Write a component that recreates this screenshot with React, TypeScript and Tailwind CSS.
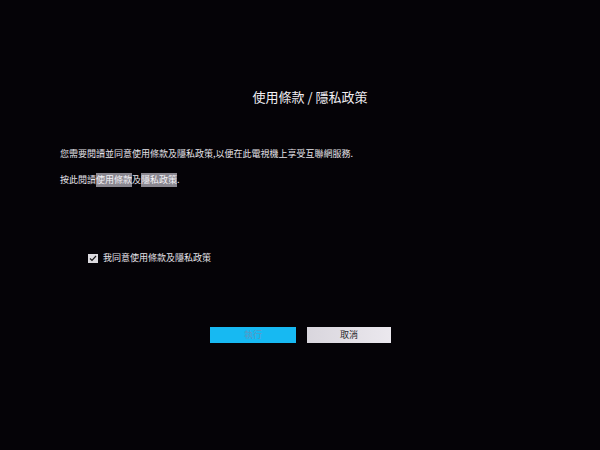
import React from 'react';

const font = { fontFamily: '"Noto Sans CJK TC", "Noto Sans CJK SC", "Liberation Sans", sans-serif' };

export default function App() {
  return (
    <div className="w-[600px] h-[450px] bg-[#050307] text-[#e6e4ea] overflow-hidden" style={font}>
      {/* 標題 */}
      <div className="pt-[88px] pl-[20px] text-center text-[13px] leading-[18px] text-[#f0eef2]">
        使用條款 / 隱私政策
      </div>

      {/* 說明文字 */}
      <div className="pl-[60px] pt-[42px] text-[9px] leading-[12px]">
        <p>您需要閱讀並同意使用條款及隱私政策,以便在此電視機上享受互聯網服務.</p>
        <p className="mt-[13px] leading-[14px]">
          按此閱讀
          <span className="inline-block bg-[#8a8790] text-[#f4f2f6]">使用條款</span>
          及
          <span className="inline-block bg-[#8a8790] text-[#f4f2f6]">隱私政策</span>
          .
        </p>
      </div>

      {/* 同意勾選 */}
      <div className="pl-[88px] pt-[65px] flex items-center gap-[5px] text-[9px] leading-[12px]">
        <div className="w-[10px] h-[9px] bg-[#dcdadf] flex items-center justify-center">
          <svg width="8" height="7" viewBox="0 0 8 7">
            <path d="M1 3.5 L3 5.5 L7 1" stroke="#1a1a1a" strokeWidth="1.2" fill="none" />
          </svg>
        </div>
        <span>我同意使用條款及隱私政策</span>
      </div>

      {/* 按鈕 */}
      <div className="pl-[210px] pt-[63px] flex gap-[11px] text-[9px]">
        <button className="w-[86px] h-[16px] bg-[#17b9f2] text-[#5a98c4] leading-[16px]">執行</button>
        <button className="w-[84px] h-[16px] bg-gradient-to-r from-[#d9d6dd] to-[#ebe8ee] text-[#2a282c] leading-[16px]">取消</button>
      </div>
    </div>
  );
}
